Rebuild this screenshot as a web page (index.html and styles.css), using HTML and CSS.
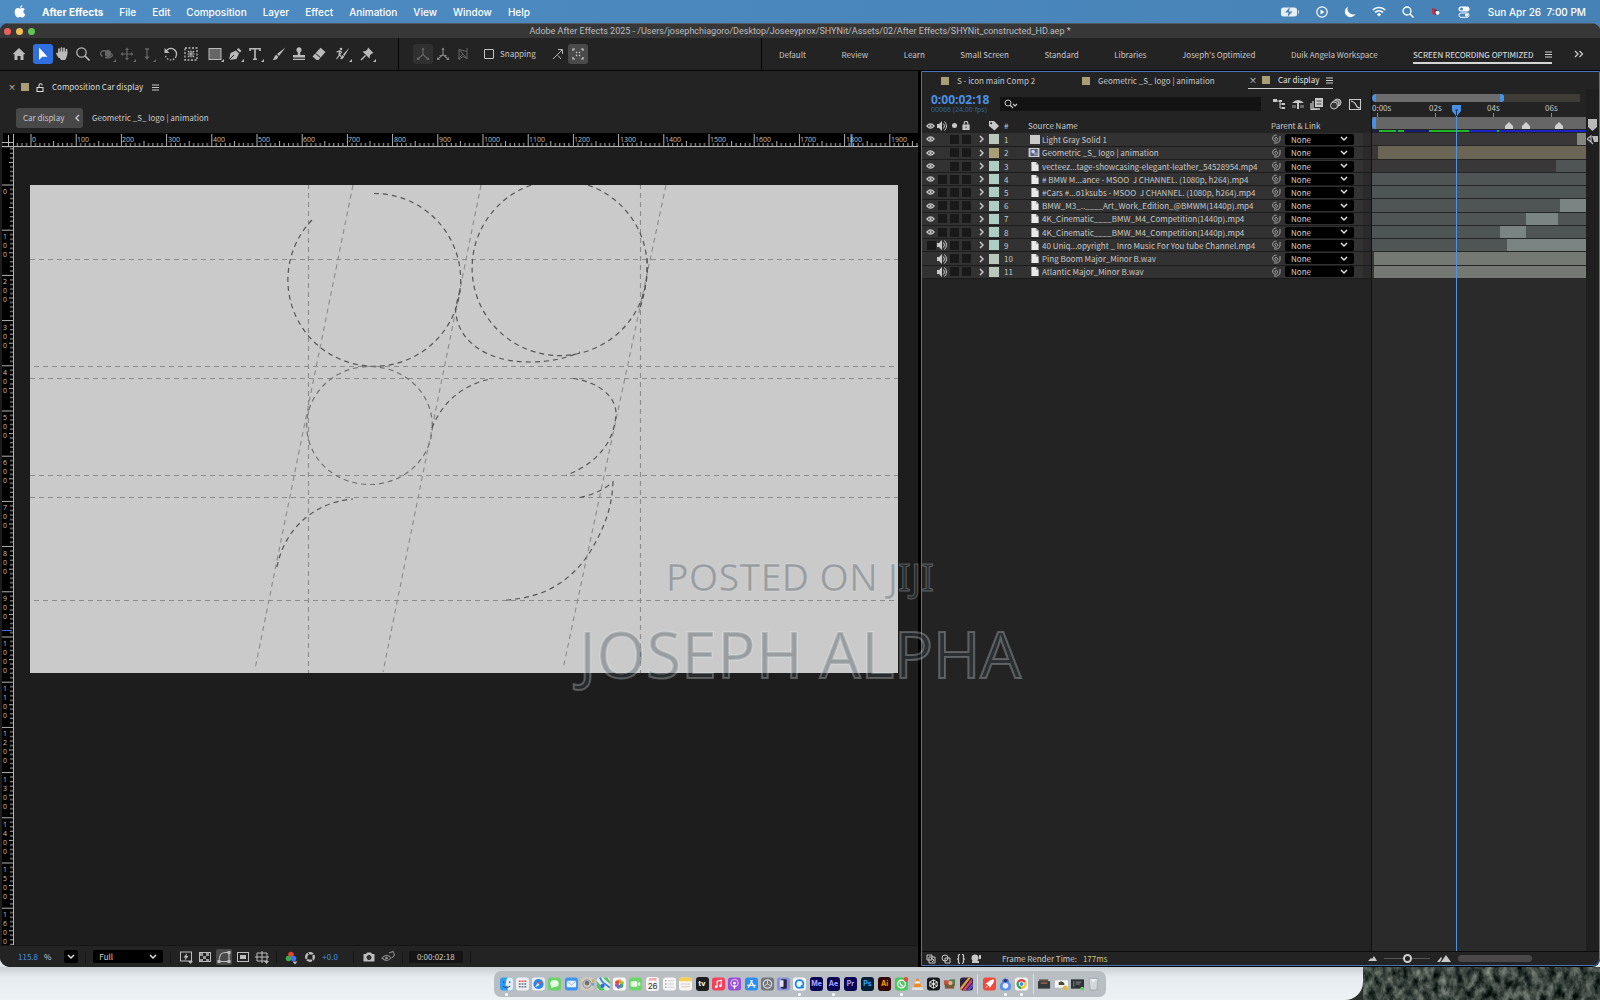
FILE: index.html
```html
<!DOCTYPE html>
<html lang="en">
<head>
<meta charset="utf-8">
<title>Adobe After Effects 2025</title>
<link rel="stylesheet" href="styles.css">
</head>
<body>
<svg class="defs" aria-hidden="true">
  <symbol id="eye" viewBox="0 0 10 8"><path d="M1 4Q5-.6 9 4Q5 8.600 1 4Z" fill="none" stroke="currentColor" stroke-width="1.300"/><circle cx="5" cy="4" r="1.300" fill="currentColor"/></symbol>
  <symbol id="speaker" viewBox="0 0 10 10"><path d="M0 3h2l3-3v10l-3-3H0z" fill="currentColor"/><path d="M6.500 2.500q2 2.500 0 5M7.500.5q4 4.500 0 9" fill="none" stroke="currentColor"/></symbol>
  <symbol id="lock" viewBox="0 0 8 10"><path d="M0 4h8v6H0z" fill="currentColor"/><path d="M2 4V2.500a2 2 0 0 1 4 0V4" fill="none" stroke="currentColor" stroke-width="1.300"/><path d="M3.500 6h1v2h-1z" fill="#222"/></symbol>
  <symbol id="tag" viewBox="0 0 10 10"><path d="M0 0h5l5 5-4.500 4.500L0 5z" fill="currentColor"/><circle cx="2.200" cy="2.200" r="1" fill="#222"/></symbol>
  <symbol id="chev" viewBox="0 0 5 8"><path d="M1 1l3 3-3 3" fill="none" stroke="currentColor" stroke-width="1.500"/></symbol>
  <symbol id="file" viewBox="0 0 8 10"><path d="M0 0h5l3 3v7H0z" fill="#e9e9e9"/><path d="M5 0v3h3" fill="#999"/></symbol>
  <symbol id="swirl" viewBox="0 0 10 10"><path d="M5 5.200C4 5.800 3.200 4.300 4.300 3.600C6 2.800 7 4.500 6.500 5.700C5.800 7.600 3 7.800 2 5.800C.7 3 3 .8 5.500 1.200M9 2v3C9 8 6.500 9.600 3 8.900" fill="none" stroke="currentColor" stroke-width=".8"/></symbol>
  <symbol id="menu" viewBox="0 0 7 7"><path d="M0 1h7M0 3.500h7M0 6h7" stroke="currentColor" stroke-width=".9"/></symbol>
</svg>

<header class="menubar">
  <nav class="menus">
    <button aria-label="Apple"><svg width="12" height="13" viewBox="0 0 12 13"><path d="M8.300.2C7 .4 6 1.500 6.100 2.900 7.400 2.900 8.400 1.600 8.300.2ZM6.200 3.600C5.500 3.600 4.700 3.100 3.800 3.100 2 3.200.7 4.600.7 7c0 2.600 1.700 5.500 3.200 5.500.8 0 1.300-.5 2.300-.5s1.400.5 2.200.5c1.200 0 2.300-1.700 2.900-3.200C9 8.200 8.800 5.300 10.900 4.300 10.300 3.500 9.400 3.100 8.500 3.100c-1 0-1.500.5-2.300.5Z" fill="#fff"/></svg></button>
    <button class="app-name">After Effects</button><button>File</button><button>Edit</button><button>Composition</button><button>Layer</button><button>Effect</button><button>Animation</button><button>View</button><button>Window</button><button>Help</button>
  </nav>
  <div class="status">
    <svg width="20" height="12" viewBox="0 0 20 12"><rect x="1" y="1.500" width="16" height="9" rx="2.500" fill="#e8f0f7"/><path d="M18.500 4.500v3" stroke="#cfe0ee"/><path d="M10 1L5 6.500h3.500L7.500 11l5-5.500H9z" fill="#4884b9"/></svg>
    <svg width="12" height="12" viewBox="0 0 12 12"><circle cx="6" cy="6" r="5.200" fill="none" stroke="#fff" stroke-width="1.200"/><path d="M4.500 3.500L8.500 6l-4 2.500z" fill="#fff"/></svg>
    <svg width="12" height="12" viewBox="0 0 12 12"><path d="M4 .5a5.600 5.600 0 1 0 7.500 7.400A5.600 5.600 0 0 1 4 .5Z" fill="#fff"/></svg>
    <svg width="14" height="11" viewBox="0 0 14 11"><path d="M.8 4a9 9 0 0 1 12.400 0M3 6.400a6 6 0 0 1 8 0" fill="none" stroke="#fff" stroke-width="1.700"/><path d="M7 10.500L4.800 8.200a3.200 3.200 0 0 1 4.400 0z" fill="#fff"/></svg>
    <svg width="12" height="12" viewBox="0 0 12 12"><circle cx="5" cy="5" r="4" fill="none" stroke="#fff" stroke-width="1.300"/><path d="M8 8l3.500 3.500" stroke="#fff" stroke-width="1.400"/></svg>
    <svg width="12" height="12" viewBox="0 0 12 12"><path d="M2 2.500Q4 1 5.500 3.500L5 9Q2 9 2 6z" fill="#c52f45"/><path d="M4.500 3l4 1.500v3L5 9z" fill="#324a60"/><circle cx="7.500" cy="6.800" r="2" fill="#f5f5f5"/></svg>
    <svg width="12" height="12" viewBox="0 0 12 12"><rect x="0.500" y="0.500" width="11" height="5" rx="2.500" fill="#fff"/><circle cx="3.500" cy="3" r="1.500" fill="#4884b9"/><rect x="1" y="7" width="10" height="4.300" rx="2.100" fill="none" stroke="#fff"/><circle cx="8.500" cy="9.100" r="1.600" fill="#fff"/></svg>
    <time>Sun Apr 26&nbsp; 7:00 PM</time>
  </div>
</header>

<main class="window">
  <div class="titlebar">
    <span class="lights"><i class="red"></i><i class="yellow"></i><i class="green"></i></span>
    <span class="title">Adobe After Effects 2025 - /Users/josephchiagoro/Desktop/Joseeyprox/SHYNit/Assets/02/After Effects/SHYNit_constructed_HD.aep *</span>
  </div>

  <div class="toolbar">
    <div class="tools">
      <div class="group"><button aria-label="Home"><svg viewBox="0 0 20 20"><path d="M10 4L3.500 10.200H5.500V16H8.500V12H11.500V16H14.500V10.200H16.500Z" fill="currentColor"/></svg></button></div>
      <div class="group">
        <button class="on" aria-label="Selection"><svg viewBox="0 0 20 20"><path d="M6 3.500V16L9.200 12.700H14.500Z" fill="#fff"/></svg></button>
        <button aria-label="Hand"><svg viewBox="0 0 20 20"><path d="M6 8V5M8.500 8V4M11 8V4.300M13.500 9V5.500M4 9.500L6 13" stroke="currentColor" stroke-width="1.700" stroke-linecap="round"/><path d="M5.200 7.500h9.100c.6 3-.8 6-2.100 8.500H8.100L4.600 11.500z" fill="currentColor"/></svg></button>
        <button aria-label="Zoom"><svg viewBox="0 0 20 20"><circle cx="8.500" cy="8.500" r="4.700" fill="none" stroke="currentColor" stroke-width="1.200"/><path d="M12 12l4.500 4.500" stroke="currentColor" stroke-width="1.700"/></svg></button>
      </div>
      <div class="group dim">
        <button class="more" aria-label="Orbit"><svg viewBox="0 0 20 20"><path d="M5.500 12.500C1 9 5 6 9 7M14 9.500c4 2-1 5-6 4" fill="none" stroke="currentColor" stroke-width="1.300"/><path d="M8 7.500l3-2 3 2v4l-3 2-3-2z" fill="currentColor"/></svg></button>
        <button class="more" aria-label="Pan camera"><svg viewBox="0 0 20 20"><path d="M10 5v10M5 10h10" stroke="currentColor" stroke-width="1.200"/><path d="M8 6l2-2.500L12 6zM8 14l2 2.500 2-2.500zM6 8l-2.500 2L6 12zM14 8l2.500 2-2.500 2z" fill="currentColor"/></svg></button>
        <button class="more" aria-label="Dolly"><svg viewBox="0 0 20 20"><path d="M10 5v9M8 5h4" stroke="currentColor" stroke-width="1.300"/><path d="M7.500 12.500h5L10 16z" fill="currentColor"/></svg></button>
      </div>
      <div class="group">
        <button aria-label="Rotate"><svg viewBox="0 0 20 20"><path d="M5 7.500a5.500 5.500 0 0 1 10 5" fill="none" stroke="currentColor" stroke-width="1.400"/><path d="M15 12.500a5.500 5.500 0 0 1-10.500-1" fill="none" stroke="currentColor" stroke-width="1.300" stroke-dasharray="1.500 1.500"/><path d="M3.500 4v5h5z" fill="currentColor"/></svg></button>
        <button aria-label="Pan behind"><svg viewBox="0 0 20 20"><rect x="4" y="4" width="12" height="12" fill="none" stroke="currentColor" stroke-width="1.300" stroke-dasharray="2 1.500"/><path d="M10 6.500v7M6.500 10h7M7 7l1.500 1.500M13 7l-1.500 1.500M7 13l1.500-1.500M13 13l-1.500-1.500" stroke="currentColor" stroke-width="1.200"/></svg></button>
      </div>
      <div class="group">
        <button class="more" aria-label="Rectangle"><svg viewBox="0 0 20 20"><rect x="4" y="4.500" width="12" height="11" fill="#666" stroke="currentColor" stroke-width="1"/></svg></button>
        <button class="more" aria-label="Pen"><svg viewBox="0 0 20 20"><path d="M4 16l1.500-7L11 6.500l3 3L11.500 15zM11.800 5.500L13.500 4l3 3-1.700 1.500z" fill="currentColor"/><path d="M4 16l5-5" stroke="#232323"/></svg></button>
        <button class="more" aria-label="Type"><svg viewBox="0 0 20 20"><path d="M5 7V4.700h10V7M10 4.700v10.500M8 15.200h4" fill="none" stroke="currentColor" stroke-width="1.600"/></svg></button>
      </div>
      <div class="group">
        <button aria-label="Brush"><svg viewBox="0 0 20 20"><path d="M16.500 3.500L10 12 8 10zM7.300 10.800l2 2C8.500 15.500 6 16.500 3.500 16 5.500 15 5 11.500 7.300 10.800Z" fill="currentColor"/></svg></button>
        <button aria-label="Clone stamp"><svg viewBox="0 0 20 20"><path d="M8.800 11V8.200a2.600 2.600 0 1 1 2.400 0V11H16v2.500H4V11zM4 14.700h12v1.300H4z" fill="currentColor"/></svg></button>
        <button aria-label="Eraser"><svg viewBox="0 0 20 20"><path d="M11.500 3.800L16.500 8 9.500 16H7.500L3.500 12.500z" fill="currentColor"/><path d="M6.500 9.500l5 4" stroke="#232323"/></svg></button>
      </div>
      <div class="group"><button class="more" aria-label="Roto brush"><svg viewBox="0 0 20 20"><path d="M16.500 3.500L11.500 12 10 10.500zM9.500 11l1.700 1.500C10.500 14.500 9 15.500 7 15c1.500-1 1-3.500 2.500-4Z" fill="currentColor"/><circle cx="8" cy="5" r="1.300" fill="currentColor"/><path d="M3.500 8l3-1 2 1-2 3-3 4M6.500 7.500l-.5 3 2 2" fill="none" stroke="currentColor" stroke-width="1.200"/></svg></button></div>
      <div class="group"><button class="more" aria-label="Puppet pin"><svg viewBox="0 0 20 20"><path d="M11 3.500L16.500 9 14.800 9.500 13 11.300 12.500 14.500 5.500 7.500 8.700 7 10.500 5.200z" fill="currentColor"/><path d="M8.500 11.500L4 16" stroke="currentColor" stroke-width="1.400"/></svg></button></div>
    </div>
    <div class="options">
      <div class="group dim">
        <button class="box" aria-label="Local axis"><svg viewBox="0 0 20 20"><path d="M10 4v6.500L5 15M10 10.500L15 15" fill="none" stroke="currentColor" stroke-width="1.200"/><path d="M4 13v3h3zM16 13v3h-3zM8.500 6L10 3.500 11.500 6z" fill="currentColor"/></svg></button>
        <button aria-label="World axis"><svg viewBox="0 0 20 20"><path d="M10 4v6.500L5 15M10 10.500L15 15M6.500 11.500h7" fill="none" stroke="#808080" stroke-width="1.200"/><path d="M4 13v3h3zM16 13v3h-3zM8.500 6L10 3.500 11.500 6z" fill="#808080"/></svg></button>
        <button aria-label="View axis"><svg viewBox="0 0 20 20"><path d="M6 5.500l8 2v7l-4-2-4 3zM6 5.500l8 9M14 4v3.500M5 15l5-5" fill="none" stroke="currentColor"/></svg></button>
      </div>
      <label class="snap"><input type="checkbox">Snapping</label>
      <div class="group snapset"><button aria-label="Snap edges"><svg viewBox="0 0 20 20"><path d="M5 15l4-4M9 11l5-5M10 5.500h4.500V10M10 11.500l3 3.500" fill="none" stroke="currentColor" stroke-width="1"/></svg></button>
      <button class="box lit" aria-label="Snap features"><svg viewBox="0 0 20 20"><path d="M5 7V5h2M13 5h2v2M15 13v2h-2M7 15H5v-2M8 8l1 1M12 8l-1 1M8 12l1-1M12 12l-1-1" fill="none" stroke="currentColor" stroke-width="1.200"/></svg></button></div>
    </div>
    <nav class="workspaces">
      <a href="#">Default</a><a href="#">Review</a><a href="#">Learn</a><a href="#">Small Screen</a><a href="#">Standard</a><a href="#">Libraries</a><a href="#">Joseph's Optimized</a><a href="#">Duik Angela Workspace</a>
      <a href="#" class="current">SCREEN RECORDING OPTIMIZED<svg width="7" height="7"><use href="#menu"/></svg></a>
      <button aria-label="More workspaces"><svg width="10" height="8" viewBox="0 0 10 8"><path d="M1 1l3 3-3 3M5.500 1l3 3-3 3" fill="none" stroke="currentColor" stroke-width="1.300"/></svg></button>
    </nav>
  </div>

  <div class="panels">
    <section class="viewer">
      <div class="viewer-tab"><span class="x">×</span><i class="sw tan"></i>
        <svg width="8" height="9" viewBox="0 0 8 9"><path d="M1 4.500h6V8.500H1zM3 4.500V2.300a1.600 1.600 0 0 1 3.200 0" fill="none" stroke="currentColor" stroke-width="1.100"/></svg>
        <span>Composition Car display</span><svg class="mn" width="7" height="7"><use href="#menu"/></svg></div>
      <div class="crumbs"><button class="crumb">Car display<svg width="5" height="8" viewBox="0 0 5 8"><path d="M4 1L1 4l3 3" fill="none" stroke="currentColor" stroke-width="1.400"/></svg></button><a href="#">Geometric _S_ logo | animation</a></div>

      <svg class="hruler" height="15" viewBox="0 0 918 15" preserveAspectRatio="xMinYMin slice">
        <defs><pattern id="ht" x="30.500" width="45.200" height="15" patternUnits="userSpaceOnUse"><path d="M.5 1v12M5 10v3M9.500 10v3M14 10v3M18.600 10v3M23.100 8v5M27.600 10v3M32.100 10v3M36.600 10v3M41.200 10v3" stroke="#b5b5b5"/></pattern></defs>
        <rect x="3" width="915" height="13" fill="#000"/><rect x="14" width="904" height="15" fill="url(#ht)"/><rect x="2" y="13" width="916" height="1" fill="#b5b5b5"/>
        <path d="M8.500 2v12M13.500 1v14M2 9.500h12" stroke="#b5b5b5"/><path d="M851.500 1v12" stroke="#4a90e2" stroke-width="2"/>
        <g class="rtext"><text x="32" y="9">0</text><text x="77" y="9">100</text><text x="122" y="9">200</text><text x="168" y="9">300</text><text x="213" y="9">400</text><text x="258" y="9">500</text><text x="303" y="9">600</text><text x="348" y="9">700</text><text x="394" y="9">800</text><text x="439" y="9">900</text><text x="484" y="9">1000</text><text x="529" y="9">1100</text><text x="574" y="9">1200</text><text x="620" y="9">1300</text><text x="665" y="9">1400</text><text x="710" y="9">1500</text><text x="755" y="9">1600</text><text x="800" y="9">1700</text><text x="846" y="9">1800</text><text x="891" y="9">1900</text></g>
      </svg>
      <div class="stage">
        <svg class="vruler" width="15" viewBox="0 148 15 797" preserveAspectRatio="xMinYMin slice">
          <defs><pattern id="vt" y="184.500" width="15" height="45.200" patternUnits="userSpaceOnUse"><path d="M2 .5h11M10 5h3M10 9.500h3M10 14h3M10 18.600h3M9 23.100h4M10 27.600h3M10 32.100h3M10 36.600h3M10 41.200h3" stroke="#b5b5b5"/></pattern></defs>
          <rect x="2" y="147" width="11" height="799" fill="#000"/><rect x="0" y="147" width="13" height="799" fill="url(#vt)"/><rect x="13" y="147" width="1" height="799" fill="#b5b5b5"/><path d="M2 630.500h10" stroke="#4a6fe2"/>
          <g class="rtext vert"><text x="5" y="187">0</text><text x="5" y="232">100</text><text x="5" y="277">200</text><text x="5" y="323">300</text><text x="5" y="368">400</text><text x="5" y="413">500</text><text x="5" y="458">600</text><text x="5" y="503">700</text><text x="5" y="549">800</text><text x="5" y="594">900</text><text x="5" y="639">1000</text><text x="5" y="684">1100</text><text x="5" y="729">1200</text><text x="5" y="775">1300</text><text x="5" y="820">1400</text><text x="5" y="865">1500</text><text x="5" y="910">1600</text></g>
        </svg>
        <svg class="artboard" viewBox="30 185 868 488">
          <rect x="30" y="185" width="868" height="488" fill="#cacaca"/>
          <g fill="none" stroke="#8b8b8b" stroke-width="1.100" stroke-dasharray="5 4">
            <path d="M30 259.500H898M34 366.500H898M30 378.500H898M30 475.500H898M30 497.500H898M34 600.500H898M308.500 184V673M640.500 184V673"/>
            <path d="M353 185L255 669M481 185L383 672M666 185L563 669"/>
          </g>
          <g fill="none" stroke="#555" stroke-width="1.200" stroke-dasharray="5 4">
            <path d="M374 193.500A86.400 86.400 0 1 1 313 219"/>
            <circle cx="559.700" cy="268" r="87.600"/>
            <path d="M460 290L455.500 308C456 340 485 362 530 362C550 362 567 358 580 352M647 258Q648 285 640 308"/>
            <ellipse cx="369.500" cy="425.500" rx="62.800" ry="59" stroke="#707070"/>
            <path d="M432 428C441 405 460 385 492 378.500M573 378.500C600 382 617 398 616 415C614 440 600 462 566 475.500"/>
            <path d="M580 497.500Q598 494 613 482C612 510 603 530 590 552C572 580 545 598 506 600M277 567C283 535 308 503 353 499"/>
          </g>
        </svg>
      </div>
      <footer class="viewer-foot">
        <span class="blue">115.8</span><span>%</span>
        <select class="mini" aria-label="Magnification"><option> </option></select><i class="vr"></i>
        <select class="res" aria-label="Resolution"><option>Full</option></select><i class="vr"></i>
        <div class="fbtns">
          <button aria-label="Fast previews"><svg viewBox="0 0 16 16"><rect x="2.500" y="3" width="11" height="9" fill="none" stroke="currentColor"/><path d="M9 4L5.500 8.500h2L6.500 12l4-5h-2z" fill="currentColor"/><path d="M10 12h5l-2.500 3z" fill="currentColor"/></svg></button>
          <button aria-label="Transparency grid"><svg viewBox="0 0 16 16"><rect x="2.500" y="3.500" width="11" height="9" fill="none" stroke="currentColor"/><path d="M3 4h3v3H3zM9 4h3v3H9zM6 7h3v3H6zM3 10h3v2H3zM9 10h3v2H9z" fill="#999"/></svg></button>
          <button class="sel" aria-label="Mask visibility"><svg viewBox="0 0 16 16"><path d="M3 12.500C3 7 5 3.500 9 3.500h4v9z" fill="none" stroke="currentColor" stroke-width="1.200"/><path d="M1.500 11h3v3h-3zM11.500 11h3v3h-3zM11.500 2h3v3h-3z" fill="currentColor"/></svg></button>
          <button aria-label="Region of interest"><svg viewBox="0 0 16 16"><rect x="2.500" y="3.500" width="11" height="9" fill="none" stroke="currentColor"/><path d="M5 6h6v4H5z" fill="currentColor"/></svg></button>
          <button aria-label="Guides"><svg viewBox="0 0 16 16"><path d="M3 4h10v8H3zM8 2v12M1 8h14" fill="none" stroke="currentColor"/><path d="M10 12h5l-2.500 3z" fill="currentColor"/></svg></button>
        </div><i class="vr"></i>
        <div class="fbtns">
          <button aria-label="Channels"><svg viewBox="0 0 16 16"><circle cx="8" cy="5.500" r="2.800" fill="#e8432f"/><circle cx="5.500" cy="9.500" r="2.800" fill="#3aa84b"/><circle cx="10.500" cy="9.500" r="2.800" fill="#4071f0"/><path d="M9.500 12.500h5l-2.500 3z" fill="currentColor"/></svg></button>
          <button aria-label="Exposure"><svg viewBox="0 0 16 16"><circle cx="8" cy="8" r="3.800" fill="none" stroke="currentColor" stroke-width="2.400"/><path d="M5 2.500l3 4M13 5l-4.500 1.500M11.500 13.500L9.500 9M3 11l4-2" stroke="#232323"/></svg></button>
        </div>
        <span class="blue">+0.0</span><i class="vr"></i>
        <div class="fbtns">
          <button aria-label="Snapshot"><svg viewBox="0 0 16 16"><path d="M2.500 5H5l1-1.500h4L11 5h2.500v7.500h-11z" fill="currentColor"/><circle cx="8" cy="8.500" r="2" fill="#333" stroke="#222"/></svg></button>
          <button aria-label="Show snapshot"><svg viewBox="0 0 16 16"><path d="M2 9Q7 3.500 11 9Q7 14 2 9ZM9 4l4-1.500L14.500 6 12 9" fill="none" stroke="#8a8a8a" stroke-width="1.100"/><circle cx="6.500" cy="9" r="1.500" fill="#8a8a8a"/></svg></button>
        </div><i class="vr"></i>
        <output class="tc">0:00:02:18</output><i class="vr"></i>
      </footer>
    </section>

    <section class="timeline">
      <div class="tabs">
        <a href="#" class="t1"><i class="sw tan"></i>S - icon main Comp 2</a>
        <a href="#" class="t2"><i class="sw tan"></i>Geometric _S_ logo | animation</a>
        <a href="#" class="active"><span class="x">×</span><i class="sw tan"></i>Car display<svg width="7" height="7"><use href="#menu"/></svg></a>
      </div>
      <div class="tl-body">
        <div class="outline">
          <div class="tl-head">
            <div class="time"><b>0:00:02:18</b><small>00066 (24.00 fps)</small></div>
            <label class="search"><svg width="14" height="10" viewBox="0 0 14 10"><circle cx="4" cy="4" r="3" fill="none" stroke="currentColor"/><path d="M6 6l3 3M9 5l2 2 2-2" fill="none" stroke="currentColor" stroke-width="1.200"/></svg><input type="text" aria-label="Search layers"></label>
            <div class="switches">
              <svg viewBox="0 0 14 12"><path d="M1 1h4v3H1zM7 2h3v2H7zM10 5h3v2h-3zM10 9h3v2h-3z" fill="currentColor"/><path d="M5 3h4M8 3v7h3M8 6h3" fill="none" stroke="currentColor"/></svg>
              <svg viewBox="0 0 14 12"><path d="M1 5Q7-1 13 5zM6 4h2v7H6z" fill="currentColor"/><path d="M1 7h4v3H1zM9 7h4v3H9z" fill="#666"/></svg>
              <svg viewBox="0 0 14 12"><path d="M5 0h8v9H5z" fill="currentColor"/><path d="M3 3v8h7M1 5v6.500h6" fill="none" stroke="currentColor" stroke-width="1.300"/><path d="M6.500 3h5M6.500 6h5" stroke="#444"/></svg>
              <svg viewBox="0 0 14 12"><circle cx="8.500" cy="4.500" r="3.500" fill="#777" stroke="currentColor"/><circle cx="6.500" cy="6" r="3.500" fill="#444" stroke="currentColor"/><circle cx="5" cy="7.500" r="3.500" fill="#333" stroke="currentColor"/></svg>
              <svg viewBox="0 0 14 12"><path d="M1.500 1.500h11v10h-11zM3 3q4 1 5 4t4 3" fill="none" stroke="currentColor" stroke-width="1.100"/></svg>
            </div>
          </div>
          <table class="layers">
            <colgroup><col class="c-a"><col class="c-a"><col class="c-a"><col class="c-a"><col class="c-ar"><col class="c-sw"><col class="c-n"><col class="c-ic"><col><col class="c-pk"><col class="c-pl"></colgroup>
            <thead><tr><th><svg class="i-eye"><use href="#eye"/></svg></th><th><svg class="i-spk"><use href="#speaker"/></svg></th><th><i class="dot"></i></th><th><svg class="i-lock"><use href="#lock"/></svg></th><th></th><th><svg class="i-spk"><use href="#tag"/></svg></th><th>#</th><th colspan="2" class="src">Source Name</th><th colspan="2" class="par">Parent &amp; Link</th></tr></thead>
            <tbody>
              <tr><td><svg class="i-eye"><use href="#eye"/></svg></td><td></td><td><i class="bx"></i></td><td><i class="bx"></i></td><td><svg class="i-ch"><use href="#chev"/></svg></td><td><i class="lb sage"></i></td><td>1</td><td><i class="solid"></i></td><td class="nm">Light Gray Solid 1</td><td><svg class="i-sp"><use href="#swirl"/></svg></td><td><select aria-label="Parent of layer 1"><option>None</option></select></td></tr>
              <tr><td><svg class="i-eye"><use href="#eye"/></svg></td><td></td><td><i class="bx"></i></td><td><i class="bx"></i></td><td><svg class="i-ch"><use href="#chev"/></svg></td><td><i class="lb tan"></i></td><td>2</td><td><svg class="i-comp" viewBox="0 0 12 10"><path d="M0 0h12v10H0z" fill="#ccc"/><path d="M2 1h8v8H2z" fill="#5a5f7c"/><circle cx="5" cy="4" r="2" fill="#cdd2ef"/><path d="M6 5h3v3H6z" fill="#9a9cb4"/></svg></td><td class="nm">Geometric _S_ logo | animation</td><td><svg class="i-sp"><use href="#swirl"/></svg></td><td><select aria-label="Parent of layer 2"><option>None</option></select></td></tr>
              <tr><td><svg class="i-eye"><use href="#eye"/></svg></td><td></td><td><i class="bx"></i></td><td><i class="bx"></i></td><td><svg class="i-ch"><use href="#chev"/></svg></td><td><i class="lb aqua"></i></td><td>3</td><td><svg class="i-file"><use href="#file"/></svg></td><td class="nm">vecteez...tage-showcasing-elegant-leather_54528954.mp4</td><td><svg class="i-sp"><use href="#swirl"/></svg></td><td><select aria-label="Parent of layer 3"><option>None</option></select></td></tr>
              <tr><td><svg class="i-eye"><use href="#eye"/></svg></td><td><i class="bx"></i></td><td><i class="bx"></i></td><td><i class="bx"></i></td><td><svg class="i-ch"><use href="#chev"/></svg></td><td><i class="lb aqua"></i></td><td>4</td><td><svg class="i-file"><use href="#file"/></svg></td><td class="nm"># BMW M...ance - MSOO&nbsp; J CHANNEL. (1080p, h264).mp4</td><td><svg class="i-sp"><use href="#swirl"/></svg></td><td><select aria-label="Parent of layer 4"><option>None</option></select></td></tr>
              <tr><td><svg class="i-eye"><use href="#eye"/></svg></td><td><i class="bx"></i></td><td><i class="bx"></i></td><td><i class="bx"></i></td><td><svg class="i-ch"><use href="#chev"/></svg></td><td><i class="lb aqua"></i></td><td>5</td><td><svg class="i-file"><use href="#file"/></svg></td><td class="nm">#Cars #...o1ksubs - MSOO&nbsp; J CHANNEL. (1080p, h264).mp4</td><td><svg class="i-sp"><use href="#swirl"/></svg></td><td><select aria-label="Parent of layer 5"><option>None</option></select></td></tr>
              <tr><td><svg class="i-eye"><use href="#eye"/></svg></td><td><i class="bx"></i></td><td><i class="bx"></i></td><td><i class="bx"></i></td><td><svg class="i-ch"><use href="#chev"/></svg></td><td><i class="lb aqua"></i></td><td>6</td><td><svg class="i-file"><use href="#file"/></svg></td><td class="nm">BMW_M3_..____Art_Work_Edition_@BMWM(1440p).mp4</td><td><svg class="i-sp"><use href="#swirl"/></svg></td><td><select aria-label="Parent of layer 6"><option>None</option></select></td></tr>
              <tr><td><svg class="i-eye"><use href="#eye"/></svg></td><td><i class="bx"></i></td><td><i class="bx"></i></td><td><i class="bx"></i></td><td><svg class="i-ch"><use href="#chev"/></svg></td><td><i class="lb aqua"></i></td><td>7</td><td><svg class="i-file"><use href="#file"/></svg></td><td class="nm">4K_Cinematic____BMW_M4_Competition(1440p).mp4</td><td><svg class="i-sp"><use href="#swirl"/></svg></td><td><select aria-label="Parent of layer 7"><option>None</option></select></td></tr>
              <tr><td><svg class="i-eye"><use href="#eye"/></svg></td><td><i class="bx"></i></td><td><i class="bx"></i></td><td><i class="bx"></i></td><td><svg class="i-ch"><use href="#chev"/></svg></td><td><i class="lb aqua"></i></td><td>8</td><td><svg class="i-file"><use href="#file"/></svg></td><td class="nm">4K_Cinematic____BMW_M4_Competition(1440p).mp4</td><td><svg class="i-sp"><use href="#swirl"/></svg></td><td><select aria-label="Parent of layer 8"><option>None</option></select></td></tr>
              <tr><td><i class="bx"></i></td><td><svg class="i-spk"><use href="#speaker"/></svg></td><td><i class="bx"></i></td><td><i class="bx"></i></td><td><svg class="i-ch"><use href="#chev"/></svg></td><td><i class="lb aqua"></i></td><td>9</td><td><svg class="i-file"><use href="#file"/></svg></td><td class="nm">40 Uniq...opyright _ Inro Music For You tube Channel.mp4</td><td><svg class="i-sp"><use href="#swirl"/></svg></td><td><select aria-label="Parent of layer 9"><option>None</option></select></td></tr>
              <tr><td></td><td><svg class="i-spk"><use href="#speaker"/></svg></td><td><i class="bx"></i></td><td><i class="bx"></i></td><td><svg class="i-ch"><use href="#chev"/></svg></td><td><i class="lb sage"></i></td><td>10</td><td><svg class="i-file"><use href="#file"/></svg></td><td class="nm">Ping Boom Major_Minor B.wav</td><td><svg class="i-sp"><use href="#swirl"/></svg></td><td><select aria-label="Parent of layer 10"><option>None</option></select></td></tr>
              <tr><td></td><td><svg class="i-spk"><use href="#speaker"/></svg></td><td><i class="bx"></i></td><td><i class="bx"></i></td><td><svg class="i-ch"><use href="#chev"/></svg></td><td><i class="lb sage"></i></td><td>11</td><td><svg class="i-file"><use href="#file"/></svg></td><td class="nm">Atlantic Major_Minor B.wav</td><td><svg class="i-sp"><use href="#swirl"/></svg></td><td><select aria-label="Parent of layer 11"><option>None</option></select></td></tr>
            </tbody>
          </table>
        </div>
        <div class="graph">
          <div class="navigator"><i class="h"></i><i class="view"></i><i class="h r"></i><i class="rest"></i></div>
          <div class="scale"><span>0:00s</span><span>02s</span><span>04s</span><span>06s</span></div>
          <div class="work"><i class="h"></i>
            <svg class="mk" viewBox="0 0 209 12"><path d="M129 12V9L133 5 137 9V12zM146 12V9L150 5 154 9V12zM179 12V9L183 5 187 9V12z" fill="#d0d0d0"/></svg></div>
          <div class="cache"></div>
          <div class="tracks">
            <div class="trk dk"><i class="solidbar" style="margin-left:96%;width:4%"></i></div>
            <div class="trk dk"><i class="tanbar" style="margin-left:3%;width:97%"></i></div>
            <div class="trk dk"><i class="base" style="margin-left:86%;width:14%"></i></div>
            <div class="trk base"></div>
            <div class="trk base"></div>
            <div class="trk base"><i class="clip" style="margin-left:88%;width:12%"></i></div>
            <div class="trk base"><i class="clip" style="margin-left:72%;width:15%"></i></div>
            <div class="trk base"><i class="clip" style="margin-left:60%;width:12%"></i></div>
            <div class="trk base"><i class="clip" style="margin-left:63%;width:37%"></i></div>
            <div class="trk dk"><i class="audio" style="margin-left:1%;width:99%"></i></div>
            <div class="trk dk"><i class="audio" style="margin-left:1%;width:99%"></i></div>
          </div>
          <div class="empty"></div>
          <div class="playhead"><svg width="9" height="11" viewBox="0 0 9 11"><path d="M0 0h9v6L5 11H4L0 6z" fill="#4a90e2"/><path d="M3 5h3M4.500 5v6" stroke="#173a66"/></svg></div>
        </div>
        <div class="side"><svg width="11" height="33" viewBox="0 0 11 33"><path d="M1 0h9v8L5.500 12 1 8z" fill="#b9b9b9"/><path d="M5 17h6v6H7z" fill="#b9b9b9"/><path d="M0 20l4-3v6zM2 21l4 4" fill="none" stroke="#b9b9b9" stroke-width="1.200"/></svg></div>
      </div>
      <footer class="tl-foot">
        <div class="ficons">
          <svg viewBox="0 0 10 10"><path d="M1 1h5v5H1zM3 3h6v6H3z" fill="none" stroke="currentColor"/><path d="M5 4l3 2-2 2" stroke="currentColor" fill="none"/></svg>
          <svg viewBox="0 0 10 10"><circle cx="4" cy="4" r="3" fill="none" stroke="currentColor"/><path d="M4 4h5v5H4z" fill="none" stroke="currentColor"/></svg>
          <svg viewBox="0 0 10 10"><path d="M4 .5Q2 .5 2.500 3T1 5Q3 5 2.500 7T4 9.500M6 .5Q8 .5 7.500 3T9 5Q7 5 7.500 7T6 9.500" fill="none" stroke="currentColor" stroke-width="1.200"/></svg>
          <svg viewBox="0 0 10 10"><circle cx="4" cy="4" r="3.500" fill="currentColor"/><path d="M1 7h7v2H1zM8 1h2v4H8z" fill="currentColor"/></svg>
        </div>
        <span class="frt">Frame Render Time:</span><span class="ms">177ms</span>
        <div class="zoomer">
          <svg width="9" height="5" viewBox="0 0 9 5"><path d="M0 5l3-3 1 1 2-3 3 5z" fill="currentColor"/></svg>
          <input type="range" aria-label="Timeline zoom" value="50">
          <svg width="14" height="7" viewBox="0 0 14 7"><path d="M0 7l4-5 1 1-2 4zM4 7l5-7 5 7z" fill="currentColor"/></svg>
          <i class="hbar"></i>
        </div>
      </footer>
    </section>
  </div>
</main>

<div class="desk">
  <div class="sheet"></div>
  <svg class="rock"><filter id="grass" color-interpolation-filters="sRGB"><feTurbulence type="fractalNoise" baseFrequency=".13 .09" numOctaves="4" seed="7"/><feColorMatrix values=".8 0 0 0 -.17  .8 0 0 0 -.13  .75 0 0 0 -.13  0 0 0 0 1"/></filter><rect width="100%" height="100%" filter="url(#grass)"/></svg>
  <nav class="dock">
    <button class="run" aria-label="Finder"><svg viewBox="0 0 14 14"><rect width="14" height="14" rx="3" fill="#2e9df2"/><path d="M8 0h3a3 3 0 0 1 3 3v8a3 3 0 0 1-3 3H8.500L8 9H6q0-5 2-9z" fill="#e2eefa"/><path d="M4 4v2M10.500 4v2M3 9.500q4 3 8 0" fill="none" stroke="#123c66"/></svg></button>
    <button aria-label="Launchpad"><svg viewBox="0 0 14 14"><rect width="14" height="14" rx="3" fill="#eceef1"/><path d="M3 4h8" stroke="#e05548" stroke-width="1.500" stroke-dasharray="2 1"/><path d="M3 7h8M3 10h8" stroke="#69788c" stroke-width="1.500" stroke-dasharray="2 1"/></svg></button>
    <button aria-label="Safari"><svg viewBox="0 0 14 14"><rect width="14" height="14" rx="3" fill="#e8edf3"/><circle cx="7" cy="7" r="5.500" fill="#2c83ea"/><path d="M10.500 3.500L8 8 6 6z" fill="#f14b40"/><path d="M3.500 10.500L8 8 6 6z" fill="#fff"/></svg></button>
    <button aria-label="Messages"><svg viewBox="0 0 14 14"><rect width="14" height="14" rx="3" fill="#6ad36b"/><ellipse cx="7" cy="6.500" rx="4.500" ry="3.800" fill="#e7fbe4"/><path d="M4 9l-.5 2.500L7 10z" fill="#e7fbe4"/></svg></button>
    <button aria-label="Mail"><svg viewBox="0 0 14 14"><rect width="14" height="14" rx="3" fill="#3f93ee"/><rect x="2" y="3.500" width="10" height="7" rx="1" fill="#eaf4ff"/><path d="M2 4l5 4 5-4" fill="none" stroke="#8ab0d9"/></svg></button>
    <button aria-label="Contacts"><svg viewBox="0 0 14 14"><rect width="14" height="14" rx="3" fill="#cfcabd"/><circle cx="6.500" cy="6" r="2.500" fill="#68707a"/><circle cx="6.500" cy="7" r="4.500" fill="none" stroke="#888d90"/><path d="M13 2v3" stroke="#e6a23c" stroke-width="2"/><path d="M13 6v3" stroke="#4ca6e0" stroke-width="2"/></svg></button>
    <button aria-label="Maps"><svg viewBox="0 0 14 14"><rect width="14" height="14" rx="3" fill="#e4ecdc"/><path d="M0 4l9 10H3L0 11zM6 0h5l3 4v3z" fill="#57c067"/><path d="M3 0l3 5 8 6" fill="none" stroke="#3d82e8" stroke-width="2"/><circle cx="6" cy="9" r="2.300" fill="#2f6ee0"/></svg></button>
    <button aria-label="Photos"><svg viewBox="0 0 14 14"><rect width="14" height="14" rx="3" fill="#f6f6f6"/><circle cx="7" cy="4" r="2.200" fill="#f39a2e"/><circle cx="9.600" cy="6" r="2.200" fill="#a1c33b"/><circle cx="9" cy="9" r="2.200" fill="#3f9f82"/><circle cx="6" cy="10" r="2.200" fill="#5573c9"/><circle cx="4.200" cy="8" r="2.200" fill="#a854a5"/><circle cx="4.500" cy="5.200" r="2.200" fill="#e8493f"/></svg></button>
    <button aria-label="FaceTime"><svg viewBox="0 0 14 14"><rect width="14" height="14" rx="3" fill="#6fd66b"/><rect x="2" y="4" width="7" height="6" rx="1.500" fill="#eafce8"/><path d="M9.500 6.500L12 4.500v5l-2.500-2z" fill="#eafce8"/></svg></button>
    <button class="cal" aria-label="Calendar"><small>APR</small>26</button>
    <button aria-label="Reminders"><svg viewBox="0 0 14 14"><rect width="14" height="14" rx="3" fill="#f7f7f7"/><path d="M5 3.500h7M5 7h7M5 10.500h7" stroke="#c9c9c9"/><path d="M2.500 3.500h1M2.500 7h1M2.500 10.500h1" stroke="#777" stroke-width="1.500"/></svg></button>
    <button aria-label="Notes"><svg viewBox="0 0 14 14"><rect width="14" height="14" rx="3" fill="#f8f6ee"/><path d="M0 4V3a3 3 0 0 1 3-3h8a3 3 0 0 1 3 3v1z" fill="#f5cf4f"/><path d="M2 7h10M2 10h10" stroke="#cfcdc5"/></svg></button>
    <button class="tv" aria-label="TV">tv</button>
    <button aria-label="Music"><svg viewBox="0 0 14 14"><rect width="14" height="14" rx="3" fill="#f4405a"/><path d="M5.500 10V4l4.500-1v6" fill="none" stroke="#fff" stroke-width="1.200"/><circle cx="4.500" cy="10" r="1.500" fill="#fff"/><circle cx="9" cy="9" r="1.500" fill="#fff"/></svg></button>
    <button aria-label="Podcasts"><svg viewBox="0 0 14 14"><rect width="14" height="14" rx="3" fill="#9a50d3"/><circle cx="7" cy="6" r="4" fill="none" stroke="#ead6f8"/><circle cx="7" cy="6" r="1.500" fill="#fff"/><path d="M6 8h2l-.3 4H6.300z" fill="#fff"/></svg></button>
    <button aria-label="App Store"><svg viewBox="0 0 14 14"><rect width="14" height="14" rx="3" fill="#2f8ff0"/><path d="M8 3l-4.500 8M6 3l4.500 8M2.500 8.500h9" stroke="#fff" stroke-width="1.300"/></svg></button>
    <button aria-label="Settings"><svg viewBox="0 0 14 14"><rect width="14" height="14" rx="3" fill="#73777c"/><circle cx="7" cy="7" r="4.500" fill="none" stroke="#d5d7d9" stroke-width="1.300"/><path d="M7 7V3M7 7l3.500 2M7 7l-3.500 2" stroke="#d5d7d9"/></svg></button>
    <button aria-label="iPhone Mirroring"><svg viewBox="0 0 14 14"><rect width="14" height="14" rx="3" fill="#8b90d6"/><rect x="4.500" y="2" width="6" height="10" rx="1" fill="#22254a"/><path d="M3 3h4v7H3z" fill="#e2e4f5"/></svg></button>
    <button class="run" aria-label="QuickTime"><svg viewBox="0 0 14 14"><rect width="14" height="14" rx="3" fill="#f2f7fb"/><circle cx="7" cy="7" r="4.200" fill="none" stroke="#2385e8" stroke-width="2"/><path d="M8.500 8.500l3 3" stroke="#2385e8" stroke-width="2"/></svg></button>
    <button class="adobe">Me</button><button class="adobe run">Ae</button><button class="adobe">Pr</button><button class="adobe ps">Ps</button><button class="adobe ai">Ai</button>
    <button class="run" aria-label="WhatsApp"><svg viewBox="0 0 14 14"><rect width="14" height="14" rx="3" fill="#49c95b"/><circle cx="7" cy="7" r="4.200" fill="none" stroke="#fff" stroke-width="1.200"/><path d="M5.500 5q0 3.500 3.500 4" stroke="#fff" stroke-width="1.500" fill="none"/><circle cx="12" cy="2" r="2.500" fill="#ec4a3c"/></svg></button>
    <button aria-label="VLC"><svg viewBox="0 0 14 14"><path d="M6 1h2l3.500 10h-9z" fill="#f08a24"/><path d="M5 4h4l.8 2.500H4.200z" fill="#f7f1e8"/><path d="M1.500 10.500h11l.8 3H.7z" fill="#e2e2e2"/></svg></button>
    <button aria-label="Assistant"><svg viewBox="0 0 14 14"><rect width="14" height="14" rx="3" fill="#17191b"/><path d="M7 2.500l4 2.300v4.500L7 11.500 3 9.300V4.800zM3 4.800l8 4.500M11 4.800L3 9.300M7 2.500v9" fill="none" stroke="#e5e5e5"/></svg></button>
    <button aria-label="Game"><svg viewBox="0 0 14 14"><path d="M1 3h6v5H1z" fill="#c3533c"/><path d="M7 2h6v7H7z" fill="#597d4e"/><path d="M2 7h10v5H2z" fill="#7b5a3c"/><circle cx="8" cy="6" r="2.300" fill="#e2b487"/></svg></button>
    <button aria-label="Motion"><svg viewBox="0 0 14 14"><rect width="14" height="14" rx="3" fill="#2a2440"/><path d="M0 11L9 0h3L1 14z" fill="#ea9c3a"/><path d="M2 14L13 1v4L6 14z" fill="#c9436b"/><path d="M7 14l7-8v4l-4 4z" fill="#6a4bc7"/></svg></button>
    <i class="dsep"></i>
    <button aria-label="Rocket"><svg viewBox="0 0 14 14"><rect width="14" height="14" rx="3" fill="#ee4b3e"/><path d="M11.500 2.500Q7 2.500 4.500 7l2.500 2.500Q11.500 7 11.500 2.500zM3 7l3-2M7 11l2-3M3 11l2-2" fill="#fff" stroke="#fff"/></svg></button>
    <button class="run" aria-label="Automator"><svg viewBox="0 0 14 14"><circle cx="7" cy="4.500" r="3.500" fill="#3c6fd8"/><rect x="1" y="5" width="12" height="9" rx="4" fill="#5b8fea"/><circle cx="7" cy="9" r="3" fill="#e9eef8"/><circle cx="7" cy="3.500" r="1.500" fill="#222d50"/></svg></button>
    <button class="run" aria-label="Chrome"><svg viewBox="0 0 14 14"><rect width="14" height="14" rx="3" fill="#f4f4f4"/><path d="M7 7L2.300 4.300A5.500 5.500 0 0 1 11.800 4.300z" fill="#e4402f"/><path d="M7 7L2.300 4.300A5.500 5.500 0 0 0 7 12.500z" fill="#36a352"/><path d="M7 7l4.800-2.700A5.500 5.500 0 0 1 7 12.500z" fill="#f6c62c"/><circle cx="7" cy="7" r="2.500" fill="#4281f0" stroke="#fff"/></svg></button>
    <i class="dsep"></i>
    <button aria-label="Downloads"><svg viewBox="0 0 14 14"><path d="M1 2h10v3H1z" fill="#675446"/><path d="M0 4h13v8H0z" fill="#343a3c"/><path d="M3 6h7" stroke="#8a5c4c" stroke-width="2"/></svg></button>
    <button aria-label="Minimized page"><svg viewBox="0 0 14 14"><path d="M0 3h14v8H0z" fill="#f4f5f3"/><path d="M4 5l3-1 3 2v2H4z" fill="#444c36"/><circle cx="11" cy="11" r="2.500" fill="#e0bd35"/></svg></button>
    <button aria-label="Minimized window"><svg viewBox="0 0 14 14"><path d="M0 2h14v10H0z" fill="#2e3235"/><path d="M3 4v6M5 5h6M5 7h5" stroke="#8a9096"/><circle cx="12" cy="12" r="2" fill="#64d06c"/></svg></button>
    <button aria-label="Trash"><svg viewBox="0 0 14 14"><path d="M2 1h10l-1.500 12.500h-7z" fill="#d3d7da" stroke="#a5abb0"/><path d="M4 2l3 3 3-3" fill="#f2f3f4"/></svg></button>
  </nav>
</div>

<div class="mark one">POSTED ON JIJI</div>
<div class="mark two">JOSEPH ALPHA</div>
</body>
</html>
```
FILE: styles.css
```css
* { box-sizing: border-box; }
body {
  margin: 0;
  height: 100vh;
  min-height: 600px;
  display: flex;
  flex-direction: column;
  overflow: hidden;
  position: relative;
  background: linear-gradient(#4884b9 50%, #dde2e6 50%);
  color: #c8c8c8;
  font: 8px/12px "Noto Sans CJK JP", Lato, sans-serif;
}
.defs { position: absolute; width: 0; height: 0; }
button { appearance: none; border: 0; padding: 0; margin: 0; background: none; color: inherit; font: inherit; }
a { color: inherit; text-decoration: none; }
svg { display: block; flex: none; }

/* macOS menu bar */
.menubar {
  height: 23px;
  flex: none;
  display: flex;
  justify-content: space-between;
  align-items: center;
  padding: 0 14px 0 14px;
  background: linear-gradient(90deg, #4e8cc4, #4682b5);
  color: #fff;
  font: 500 10px/14px Inter, sans-serif;
}
.menus { display: flex; gap: 16px; align-items: center; }
.app-name { font-weight: 700; }
.status { display: flex; gap: 16px; align-items: center; }
.status time { white-space: pre; margin-left: 2px; }

/* application window */
.window {
  flex: 1;
  min-height: 0;
  display: flex;
  flex-direction: column;
  background: #000;
  border-radius: 8px 8px 8px 10px;
  overflow: hidden;
  border-top: 1px solid #555a60;
  position: relative;
}
.titlebar {
  height: 14px;
  flex: none;
  display: grid;
  grid-template-columns: 1fr auto 1fr;
  align-items: center;
  background: #373737;
  color: #bdbdbd;
  font: 9px/12px Roboto, sans-serif;
}
.lights { display: flex; gap: 5px; padding-left: 4px; }
.lights i { width: 7px; height: 7px; border-radius: 50%; }
.red { background: #ee5f57; }
.yellow { background: #f4be4f; }
.green { background: #61c454; }

.toolbar { height: 33px; flex: none; display: flex; background: #232323; border-bottom: 1px solid #050505; }
.tools, .options { display: flex; align-items: center; border-right: 1px solid #050505; flex: none; }
.tools { width: 399px; gap: 4px; padding-left: 9px; }
.options { width: 363px; padding-left: 14px; }
.group { display: flex; color: #bababa; }
.group button { width: 20px; height: 20px; border-radius: 3px; position: relative; }
.group svg { width: 20px; height: 20px; }
.group.dim { color: #666; }
.group .on { background: #2f6fdf; }
.group .box { background: #303030; }
.group .lit { background: #4a4a4a; color: #ccc; }
.more::after {
  content: "";
  position: absolute;
  right: 1px;
  bottom: 2px;
  border-left: 3px solid transparent;
  border-bottom: 3px solid currentColor;
}
.snap { display: flex; align-items: center; gap: 6px; margin-left: 11px; }
.snap input { appearance: none; width: 10px; height: 10px; margin: 0; border: 1px solid #c4c4c4; border-radius: 1px; }
.snapset { margin-left: 12px; }
.workspaces { flex: 1; min-width: 0; display: flex; justify-content: space-between; align-items: center; padding: 0 16px 0 17px; white-space: nowrap; }
.workspaces a { padding: 4px 0 1px; border-bottom: 2px solid transparent; }
.workspaces .current { display: flex; align-items: center; gap: 12px; border-color: #d5d5d5; color: #e4e4e4; margin-right: -14px; }

/* panels */
.panels { flex: 1; min-height: 0; display: grid; grid-template-columns: 918fr 679fr; gap: 3px; }
.viewer { background: #232323; display: flex; flex-direction: column; min-width: 0; min-height: 0; }
.sw { width: 8px; height: 8px; flex: none; }
.tan { background: #aa9e77; }
.sage { background: #b9c7bc; }
.aqua { background: #aecdc5; }
.viewer-tab { height: 32px; display: flex; align-items: center; padding-left: 8px; color: #dadada; flex: none; }
.viewer-tab .sw { margin: 0 7px 0 5px; }
.viewer-tab span + .mn { margin-left: 9px; }
.viewer-tab svg + span { margin-left: 8px; }
.crumbs { height: 30px; display: flex; gap: 9px; align-items: center; padding: 0 0 0 16px; flex: none; }
.crumb { height: 20px; width: 67px; background: #484848; border-radius: 3px; display: flex; align-items: center; justify-content: space-between; padding: 0 3px 0 7px; }
.hruler { width: 100%; flex: none; }
.rtext { font: 7px/7px "Open Sans", sans-serif; fill: #c0c0c0; }
.vert text { writing-mode: vertical-rl; text-orientation: upright; }
.stage { flex: 1; min-height: 0; display: flex; align-items: flex-start; background: #1d1d1d; overflow: hidden; }
.vruler { height: 100%; flex: none; }
.artboard { width: 868px; height: 488px; margin: 37px 0 0 15px; }
.viewer-foot { height: 22px; flex: none; display: flex; align-items: center; border-top: 1px solid #151515; padding-left: 18px; }
.blue { color: #4a90e2; }
.viewer-foot span + span { margin-left: 6px; }
select {
  appearance: none;
  border: 0;
  margin: 0;
  border-radius: 2px;
  color: #d0d0d0;
  font: inherit;
  background: #000 url("data:image/svg+xml,%3Csvg xmlns='http://www.w3.org/2000/svg' width='8' height='6'%3E%3Cpath d='M1 1l3 3 3-3' fill='none' stroke='%23ddd' stroke-width='1.500'/%3E%3C/svg%3E") no-repeat right 6px center;
}
.mini { width: 14px; height: 13px; margin-left: 13px; background-position: center; }
.res { width: 70px; height: 13px; padding: 0 6px; }
.vr { width: 1px; height: 12px; background: #161616; margin: 0 7px; }
.fbtns { display: flex; gap: 3px; }
.fbtns + .vr { margin: 0 6px; }
.fbtns button { width: 16px; height: 16px; border-radius: 2px; }
.fbtns svg { width: 16px; height: 16px; color: #bdbdbd; }
.fbtns .sel { background: #4a4a4a; }
.fbtns + .blue { margin: 0 8px 0 4px; }
.tc { background: #141414; padding: 0 8px; height: 12px; color: #d0d0d0; }

/* timeline */
.timeline { background: #232323; border: 1px solid #4775b5; border-radius: 0 0 7px 0; display: flex; flex-direction: column; min-width: 0; min-height: 0; margin-bottom: 1px; }
.tabs { display: flex; height: 17px; flex: none; padding-left: 19px; }
.tabs a { display: flex; align-items: center; height: 17px; white-space: nowrap; }
.tabs .sw { margin-right: 8px; }
.tabs .t1 { width: 141px; }
.tabs .t2 { width: 166px; }
.tabs .active { color: #e4e4e4; border-bottom: 1px solid #d0d0d0; }
.active .x { margin-right: 5px; padding-left: 1px; }
.active svg { margin-left: 7px; }
.tl-body { flex: 1; min-height: 0; display: flex; }
.outline { flex: 1; min-width: 0; border-right: 1px solid #101010; }
.tl-head { height: 29px; display: flex; align-items: center; padding-left: 9px; }
.time { width: 69px; display: flex; flex-direction: column; color: #4a90e2; }
.time b { font: 700 12px/13px "Open Sans", sans-serif; }
.time small { font: 7px/8px "Noto Sans", sans-serif; color: #2f62a5; white-space: nowrap; }
.search { flex: 1; height: 14px; background: #131313; display: flex; align-items: center; padding-left: 4px; }
.search input { flex: 1; min-width: 0; border: 0; background: none; height: 12px; padding: 0; }
.switches { display: flex; gap: 5px; margin: 0 9px 0 11px; }
.switches svg { width: 14px; height: 12px; }

.layers { width: 100%; height: 161px; table-layout: fixed; border-collapse: collapse; white-space: nowrap; }
.layers th, .layers td { padding: 0; font: inherit; height: 13px; line-height: 11px; text-align: left; overflow: hidden; }
.layers th { height: 15px; }
.layers td { background: #323232; border-bottom: 1px solid #1c1c1c; }
.layers td:last-child { background: linear-gradient(90deg, #323232 78px, #2b2b2b 78px); }
.c-a { width: 12px; }
.c-ar { width: 16px; }
.c-sw { width: 15px; }
.c-n { width: 24px; }
.c-ic { width: 14px; }
.c-pk { width: 14px; }
.c-pl { width: 86px; }
.layers td:first-child, .layers th:first-child { padding-left: 4px; }
.layers colgroup col:first-child { width: 15px; }
.i-eye { width: 9px; height: 8px; }
.i-spk { width: 10px; height: 10px; }
.i-lock { width: 8px; height: 9px; margin-left: 1px; }
.i-ch { width: 5px; height: 8px; margin-left: 6px; }
.i-file { width: 8px; height: 9px; margin-left: 3px; }
.i-comp { width: 12px; height: 9px; }
.i-sp { width: 10px; height: 10px; }
.dot { display: block; width: 5px; height: 5px; border-radius: 50%; background: currentColor; margin-left: 3px; }
.bx { display: block; width: 9px; height: 9px; background: #191919; margin-left: 1px; }
.lb { display: block; width: 10px; height: 10px; }
.solid { display: block; width: 10px; height: 9px; background: #cacaca; margin-left: 2px; }
.layers select { width: 69px; height: 11px; padding: 0 6px; display: block; line-height: 11px; }

.graph { width: 214px; flex: none; display: flex; flex-direction: column; position: relative; background: #232323; }
.navigator { height: 8px; display: flex; margin-top: 5px; }
.navigator .h, .work .h { width: 4px; background: #4a90e2; border-radius: 4px 0 0 4px; flex: none; }
.navigator .r { border-radius: 0 2px 2px 0; }
.navigator .view { width: 124px; background: #6d6d6d; }
.navigator .rest { width: 76px; background: #3f3c38; }
.scale { height: 15px; display: grid; grid-template-columns: 46px 58px 58px 50px; line-height: 11px; }
.scale span { background: linear-gradient(#888, #888) no-repeat 5px 11px / 1px 4px; }
.scale span + span { padding-left: 11px; background-position: 17px 11px; }
.work { height: 12px; background: #666; display: flex; }
.mk { width: 209px; height: 12px; }
.cache {
  height: 4px;
  border: solid #232323;
  border-width: 1px 0;
  background: linear-gradient(90deg, #1a1f50 0 7px, #20b827 7px 24px, #1b22a8 24px 26px, #20b827 26px 32px, #181c70 32px 57px, #20b827 57px 97px, #1b22c8 97px 125px, #20b827 125px 127px, #1b22c8 127px);
}
.tracks { height: 146px; display: grid; grid-template-rows: repeat(11, 1fr); }
.trk { border-bottom: 1px solid #262626; display: flex; }
.dk { background: #393737; }
.base { background: #4e5554; }
.solidbar { background: #83857f; }
.tanbar { background: #6b6555; }
.clip { background: #7a8482; }
.audio { background: #747a73; }
.empty { flex: 1; background: #2a2a2a; }
.playhead { position: absolute; left: 80px; top: 16px; bottom: 0; width: 9px; background: linear-gradient(#4d95e0, #4d95e0) no-repeat 4px 0 / 1px 100%; }
.side { width: 13px; flex: none; padding: 30px 0 0 1px; background: #1f1f1f; }
.tl-foot { height: 14px; flex: none; display: flex; align-items: center; border-top: 1px solid #0c0c0c; padding-left: 4px; }
.ficons { display: flex; gap: 5px; }
.ficons svg { width: 10px; height: 10px; }
.frt { margin-left: 21px; }
.ms { margin-left: 6px; color: #d5c07c; }
.zoomer { margin-left: auto; display: flex; align-items: center; gap: 7px; padding-right: 67px; }
.zoomer input { appearance: none; width: 46px; height: 9px; margin: 0; background: linear-gradient(#555, #555) no-repeat 0 4px / 100% 1px; }
.zoomer input::-webkit-slider-thumb { appearance: none; width: 9px; height: 9px; border-radius: 50%; border: 2px solid #d0d0d0; background: #232323; }
.hbar { width: 74px; height: 7px; border-radius: 4px; background: #4a4848; }

/* desktop and dock */
.desk { height: 33px; flex: none; display: grid; grid-template-columns: 1363fr 237fr; background: #2a302e; position: relative; }
.sheet { background: linear-gradient(#c9ced2, #e6ebef 10px, #edf2f5); border-radius: 0 0 18px 0; }
.rock { width: 100%; height: 33px; }
.dock {
  position: absolute;
  left: 50%;
  top: 4px;
  width: 612px;
  height: 26px;
  transform: translateX(-50%);
  display: flex;
  align-items: center;
  padding: 0 4px;
  border-radius: 7px;
  background: #b9bec2;
}
.dock button { flex: 1; min-width: 0; height: 14px; position: relative; display: flex; justify-content: center; align-items: center; }
.dock svg { width: 13px; height: 14px; }
.dock .run::after { content: ""; position: absolute; bottom: -5px; width: 3px; height: 3px; border-radius: 50%; background: #fff; }
.dsep { width: 1px; height: 20px; background: #dde0e3; margin: 0 3px; }
.dock .adobe, .dock .tv { flex: none; width: 13px; margin: 0 2px; background: #0a0552; color: #a9a4ff; border-radius: 3px; font: 700 7px/14px Inter, sans-serif; }
.dock .ps { background: #041e36; color: #35a8ff; }
.dock .ai { background: #2f0602; color: #ff9a00; }
.dock .tv { background: #1b1d1f; color: #fff; }
.dock .cal { flex: none; width: 13px; margin: 0 2px; border-radius: 3px; background: #f5f5f5; color: #333; flex-direction: column; font: 8px/8px Inter, sans-serif; }
.cal small { font-size: 4px; line-height: 4px; color: #e2493c; }

/* watermark */
.mark {
  position: absolute;
  left: 50%;
  transform: translateX(-50%);
  white-space: nowrap;
  pointer-events: none;
  font-family: "Noto Sans", sans-serif;
  color: rgba(60, 70, 78, .34);
  -webkit-text-stroke: 1px rgba(235, 240, 244, .28);
}
.mark.one { top: 549px; font-size: 38px; line-height: 54px; }
.mark.two { top: 609px; font-size: 64px; line-height: 90px; -webkit-text-stroke-width: 2px; }
```
